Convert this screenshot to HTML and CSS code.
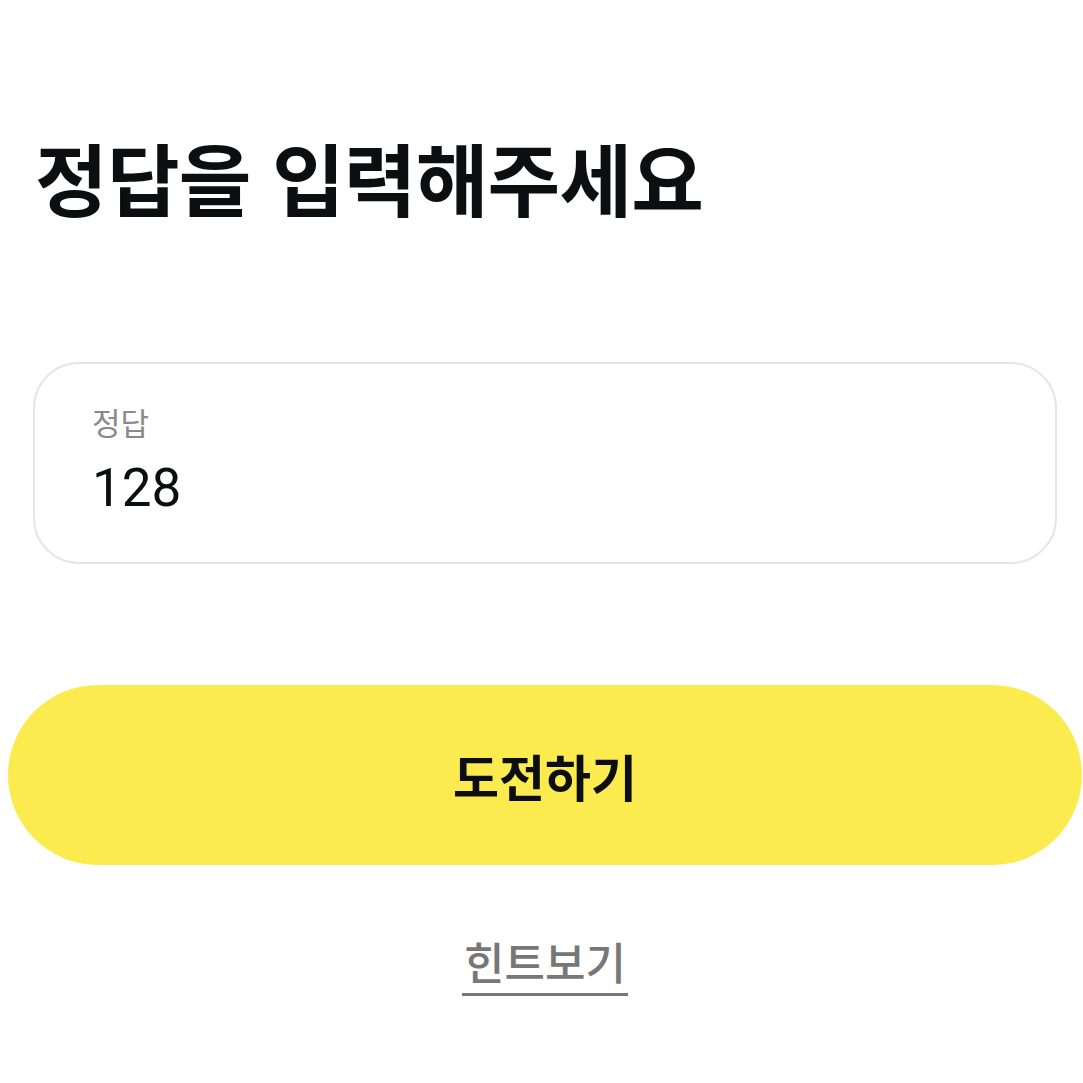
FILE: index.html
```html
<!DOCTYPE html>
<html lang="ko">
<head>
  <meta charset="UTF-8">
  <meta name="viewport" content="width=device-width, initial-scale=1.0">
  <title>정답 입력</title>
  <link rel="stylesheet" href="styles.css">
</head>
<body>
  <main class="page">
    <h1 class="title">정답을 입력해주세요</h1>

    <form id="answerForm" class="answer-form">
      <label class="field" for="answer">
        <span class="field-label">정답</span>
        <input type="text" id="answer" class="field-input" name="answer" value="128">
      </label>

      <button type="submit" class="submit-button">도전하기</button>
    </form>

    <div class="hint">
      <a href="#" class="hint-link">힌트보기</a>
    </div>
  </main>
</body>
</html>
```

FILE: styles.css
```css
body {
  margin: 0;
  background: #fff;
  font-family: "Noto Sans CJK KR", "Noto Sans", sans-serif;
  color: #0c0e12;
}

.page {
  padding: 120px 1px 0 8px;
}

.title {
  margin: 0 0 0 27px;
  font-size: 79px;
  font-weight: 700;
  line-height: 114px;
  letter-spacing: -0.8px;
}

.answer-form {
  margin-top: 128px;
}

.field {
  display: flex;
  flex-direction: column;
  height: 202px;
  margin: 0 25px;
  padding: 38px 57px 0;
  box-sizing: border-box;
  border: 2px solid #e6e6e6;
  border-radius: 46px;
}

.field-label {
  font-size: 31px;
  line-height: 40px;
  color: #8a8a8a;
}

.field-input {
  margin-top: 14px;
  padding: 0;
  border: none;
  outline: none;
  font-family: Roboto, "Noto Sans CJK KR", sans-serif;
  font-size: 53px;
  line-height: 64px;
  color: #0c0e12;
  background: transparent;
}

.submit-button {
  display: block;
  width: 100%;
  height: 180px;
  margin-top: 121px;
  border: none;
  border-radius: 90px;
  background-color: #fbeb4e;
  font-family: "Noto Sans CJK KR", sans-serif;
  font-size: 50px;
  font-weight: 600;
  color: #0c0e12;
  cursor: pointer;
}

.hint {
  margin-top: 66px;
  text-align: center;
}

.hint-link {
  display: inline-block;
  padding: 0 2px 2px;
  font-size: 44px;
  font-weight: 500;
  line-height: 60px;
  color: #777;
  text-decoration: none;
  border-bottom: 3px solid #777;
}
```
